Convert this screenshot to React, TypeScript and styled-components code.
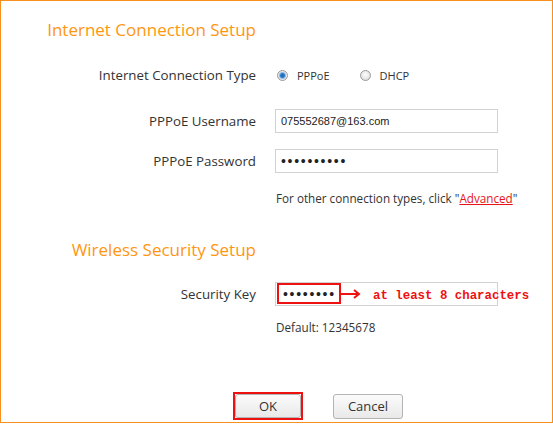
import React from "react";
import styled, { createGlobalStyle } from "styled-components";

const Global = createGlobalStyle`
  html, body { margin: 0; padding: 0; background: #fff; }
  body { font-family: "Open Sans", "DejaVu Sans", sans-serif; color: #333; }
`;

const Frame = styled.div`
  box-sizing: border-box;
  width: 553px;
  height: 423px;
  border: 1px solid #f7901e;
  padding-top: 16px;
  display: flex;
  flex-direction: column;
`;

const Row = styled.div<{ $h: number; $mt: number }>`
  display: grid;
  grid-template-columns: 255px 1fr;
  column-gap: 19px;
  align-items: center;
  height: ${(p) => p.$h}px;
  margin-top: ${(p) => p.$mt}px;
`;

const Title = styled.div`
  text-align: right;
  color: #ff960f;
  font-size: 17px;
  white-space: nowrap;
`;

const Label = styled.div`
  text-align: right;
  font-size: 13.3px;
  color: #333;
  white-space: nowrap;
`;

const Field = styled.div`
  display: flex;
  align-items: center;
`;

const RadioGroup = styled.div`
  display: flex;
  align-items: center;
  padding-left: 2px;
  font-size: 11px;
  color: #333;
`;

const RadioItem = styled.label`
  display: flex;
  align-items: center;
  gap: 9px;
  margin-right: 30px;
`;

const RadioDot = styled.span<{ $on?: boolean }>`
  box-sizing: border-box;
  width: 11px;
  height: 11px;
  border-radius: 50%;
  border: 1px solid #9a9a9a;
  background: ${(p) =>
    p.$on
      ? "radial-gradient(circle at 50% 50%, #1b5fa8 0, #2b7fd0 2px, #8fb8e0 3px, #e8e8e8 4px, #d6d6d6 100%)"
      : "radial-gradient(circle at 50% 40%, #fdfdfd 0, #e6e6e6 60%, #cfcfcf 100%)"};
`;

const TextBox = styled.div`
  position: relative;
  box-sizing: border-box;
  width: 223px;
  height: 24px;
  border: 1px solid #d2d2d2;
  background: #fff;
  display: flex;
  align-items: center;
  padding-left: 5px;
  font-family: "Liberation Sans", Arial, sans-serif;
  font-size: 11px;
  color: #222;
`;

const Dots = styled.span`
  font-family: "Liberation Sans", Arial, sans-serif;
  font-size: 14px;
  letter-spacing: 1.7px;
  color: #222;
`;

const Note = styled.div`
  font-size: 11.7px;
  color: #333;
  padding-left: 1px;
  white-space: nowrap;
`;

const Link = styled.a`
  color: #e8141b;
  text-decoration: underline;
`;

const KeyMark = styled.span`
  position: absolute;
  left: 1px;
  top: 0px;
  box-sizing: border-box;
  width: 64px;
  height: 21px;
  border: 2px solid #ee1111;
  display: flex;
  align-items: center;
  padding-left: 4px;
  overflow: hidden;
`;

const Arrow = styled.svg`
  position: absolute;
  left: 65px;
  top: 5px;
`;

const Hint = styled.span`
  position: absolute;
  left: 97px;
  top: 6px;
  font-family: "Liberation Mono", "Courier New", monospace;
  font-weight: bold;
  font-size: 12.4px;
  color: #ee1111;
  white-space: nowrap;
`;

const Buttons = styled.div`
  display: flex;
  align-items: center;
  gap: 30px;
  margin-top: 57px;
  padding-left: 232px;
`;

const Mark = styled.span`
  display: inline-flex;
  border: 2px solid #ee1111;
`;

const Button = styled.button<{ $w: number; $h: number }>`
  box-sizing: border-box;
  width: ${(p) => p.$w}px;
  height: ${(p) => p.$h}px;
  border: 1px solid #b4b4b4;
  border-radius: 3px;
  background: linear-gradient(#fbfbfb, #e9e9e9);
  font-family: "Open Sans", sans-serif;
  font-size: 13px;
  color: #333;
  padding: 0;
`;

export default function App() {
  return (
    <>
      <Global />
      <Frame>
        <Row $h={24} $mt={0}>
          <Title>Internet Connection Setup</Title>
          <span />
        </Row>
        <Row $h={24} $mt={22}>
          <Label>Internet Connection Type</Label>
          <RadioGroup>
            <RadioItem>
              <RadioDot $on />
              PPPoE
            </RadioItem>
            <RadioItem>
              <RadioDot />
              DHCP
            </RadioItem>
          </RadioGroup>
        </Row>
        <Row $h={24} $mt={22}>
          <Label>PPPoE Username</Label>
          <Field>
            <TextBox>075552687@163.com</TextBox>
          </Field>
        </Row>
        <Row $h={24} $mt={16}>
          <Label>PPPoE Password</Label>
          <Field>
            <TextBox>
              <Dots>••••••••••</Dots>
            </TextBox>
          </Field>
        </Row>
        <Row $h={16} $mt={17}>
          <span />
          <Note>
            For other connection types, click "<Link>Advanced</Link>"
          </Note>
        </Row>
        <Row $h={24} $mt={31}>
          <Title>Wireless Security Setup</Title>
          <span />
        </Row>
        <Row $h={24} $mt={21}>
          <Label>Security Key</Label>
          <Field>
            <TextBox>
              <KeyMark>
                <Dots>••••••••</Dots>
              </KeyMark>
              <Arrow width="20" height="12" viewBox="0 0 20 12">
                <line x1="0" y1="6" x2="18" y2="6" stroke="#ee1111" strokeWidth="2" />
                <polyline points="13,2 18,6 13,10" fill="none" stroke="#ee1111" strokeWidth="2" />
              </Arrow>
              <Hint>at least 8 characters</Hint>
            </TextBox>
          </Field>
        </Row>
        <Row $h={16} $mt={13}>
          <span />
          <Note>Default: 12345678</Note>
        </Row>
        <Buttons>
          <Mark>
            <Button $w={66} $h={24}>OK</Button>
          </Mark>
          <Button $w={70} $h={25}>Cancel</Button>
        </Buttons>
      </Frame>
    </>
  );
}
